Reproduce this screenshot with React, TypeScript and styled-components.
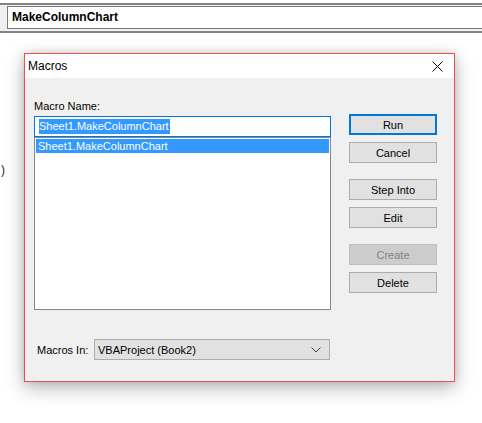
import React from "react";
import styled, { createGlobalStyle } from "styled-components";

const Global = createGlobalStyle`
  html, body { margin: 0; padding: 0; background: #ffffff; }
  body { font-family: "Liberation Sans", Arial, sans-serif; color: #000; width: 482px; height: 423px; overflow: hidden; position: relative; }
  * { box-sizing: border-box; }
`;

const FormulaBar = styled.div`
  margin-top: 3px;
  border-top: 2px solid #838383;
  border-bottom: 2px solid #838383;
  background: #f0f0f0;
  padding: 1px 0 2px 7px;
`;

const NameBox = styled.div`
  height: 23px;
  border: 1px solid #7a7a7a;
  border-right: none;
  background: #ffffff;
  font-weight: bold;
  font-size: 12px;
  line-height: 21px;
  padding-left: 4px;
`;

const SheetGlyph = styled.span`
  position: absolute;
  left: 1px;
  top: 163px;
  font-size: 12px;
  color: #222;
`;

const Dialog = styled.div`
  margin: 20px 0 0 24px;
  width: 431px;
  height: 329px;
  border: 1px solid #e9514f;
  background: #f0f0f0;
  box-shadow: 0 6px 18px rgba(0, 0, 0, 0.28), 0 0 8px rgba(0, 0, 0, 0.12);
  display: flex;
  flex-direction: column;
`;

const TitleBar = styled.div`
  height: 24px;
  background: #ffffff;
  display: flex;
  align-items: center;
  justify-content: space-between;
  padding: 0 11px 0 3px;
  font-size: 12px;
`;

const CloseIcon = styled.svg`
  width: 11px;
  height: 11px;
  display: block;
`;

const Body = styled.div`
  display: grid;
  grid-template-columns: 297px 88px;
  column-gap: 18px;
  padding: 21px 0 0 9px;
`;

const LeftCol = styled.div`
  display: flex;
  flex-direction: column;
`;

const Label = styled.div`
  font-size: 11px;
  line-height: 14px;
  margin-bottom: 3px;
`;

const NameInput = styled.div`
  height: 21px;
  border: 1px solid #0078d7;
  background: #fff;
  padding: 2px 0 0 4px;
  font-size: 11px;
  line-height: 15px;
`;

const Selected = styled.span`
  display: inline-block;
  background: #3399ff;
  color: #fff;
  height: 15px;
  padding-right: 1px;
`;

const ListBox = styled.div`
  height: 173px;
  border: 1px solid #828790;
  background: #fff;
  padding: 1px;
`;

const ListItem = styled.div<{ $selected?: boolean }>`
  height: 14px;
  font-size: 11px;
  line-height: 14px;
  padding-left: 2px;
  background: ${(p) => (p.$selected ? "#3399ff" : "transparent")};
  color: ${(p) => (p.$selected ? "#fff" : "#000")};
`;

const ButtonCol = styled.div`
  display: flex;
  flex-direction: column;
  padding-top: 15px;
`;

const Button = styled.div<{ $default?: boolean; $disabled?: boolean; $gap?: number }>`
  height: 21px;
  margin-top: ${(p) => p.$gap ?? 0}px;
  border: ${(p) => (p.$default ? "2px solid #0078d7" : p.$disabled ? "1px solid #bfbfbf" : "1px solid #adadad")};
  background: ${(p) => (p.$disabled ? "#cccccc" : "#e1e1e1")};
  color: ${(p) => (p.$disabled ? "#838383" : "#000")};
  font-size: 11px;
  display: flex;
  align-items: center;
  justify-content: center;
`;

const Footer = styled.div`
  display: flex;
  align-items: center;
  margin-top: 29px;
  padding-left: 12px;
`;

const FooterLabel = styled.div`
  font-size: 11px;
  width: 57px;
`;

const Select = styled.div`
  width: 236px;
  height: 21px;
  border: 1px solid #adadad;
  background: #e1e1e1;
  font-size: 11px;
  display: flex;
  align-items: center;
  justify-content: space-between;
  padding: 0 8px 0 3px;
`;

const Chevron = styled.svg`
  width: 10px;
  height: 6px;
  display: block;
`;

export default function App() {
  return (
    <>
      <Global />
      <FormulaBar>
        <NameBox>MakeColumnChart</NameBox>
      </FormulaBar>
      <SheetGlyph>)</SheetGlyph>
      <Dialog>
        <TitleBar>
          <span>Macros</span>
          <CloseIcon viewBox="0 0 11 11">
            <path d="M0.5 0.5 L10.5 10.5 M10.5 0.5 L0.5 10.5" stroke="#000" strokeWidth="1" fill="none" />
          </CloseIcon>
        </TitleBar>
        <Body>
          <LeftCol>
            <Label>Macro Name:</Label>
            <NameInput>
              <Selected>Sheet1.MakeColumnChart</Selected>
            </NameInput>
            <ListBox>
              <ListItem $selected>Sheet1.MakeColumnChart</ListItem>
            </ListBox>
          </LeftCol>
          <ButtonCol>
            <Button $default>Run</Button>
            <Button $gap={7}>Cancel</Button>
            <Button $gap={16}>Step Into</Button>
            <Button $gap={7}>Edit</Button>
            <Button $gap={16} $disabled>Create</Button>
            <Button $gap={7}>Delete</Button>
          </ButtonCol>
        </Body>
        <Footer>
          <FooterLabel>Macros In:</FooterLabel>
          <Select>
            <span>VBAProject (Book2)</span>
            <Chevron viewBox="0 0 10 6">
              <path d="M0.5 0.5 L5 5 L9.5 0.5" stroke="#404040" strokeWidth="1" fill="none" />
            </Chevron>
          </Select>
        </Footer>
      </Dialog>
    </>
  );
}
